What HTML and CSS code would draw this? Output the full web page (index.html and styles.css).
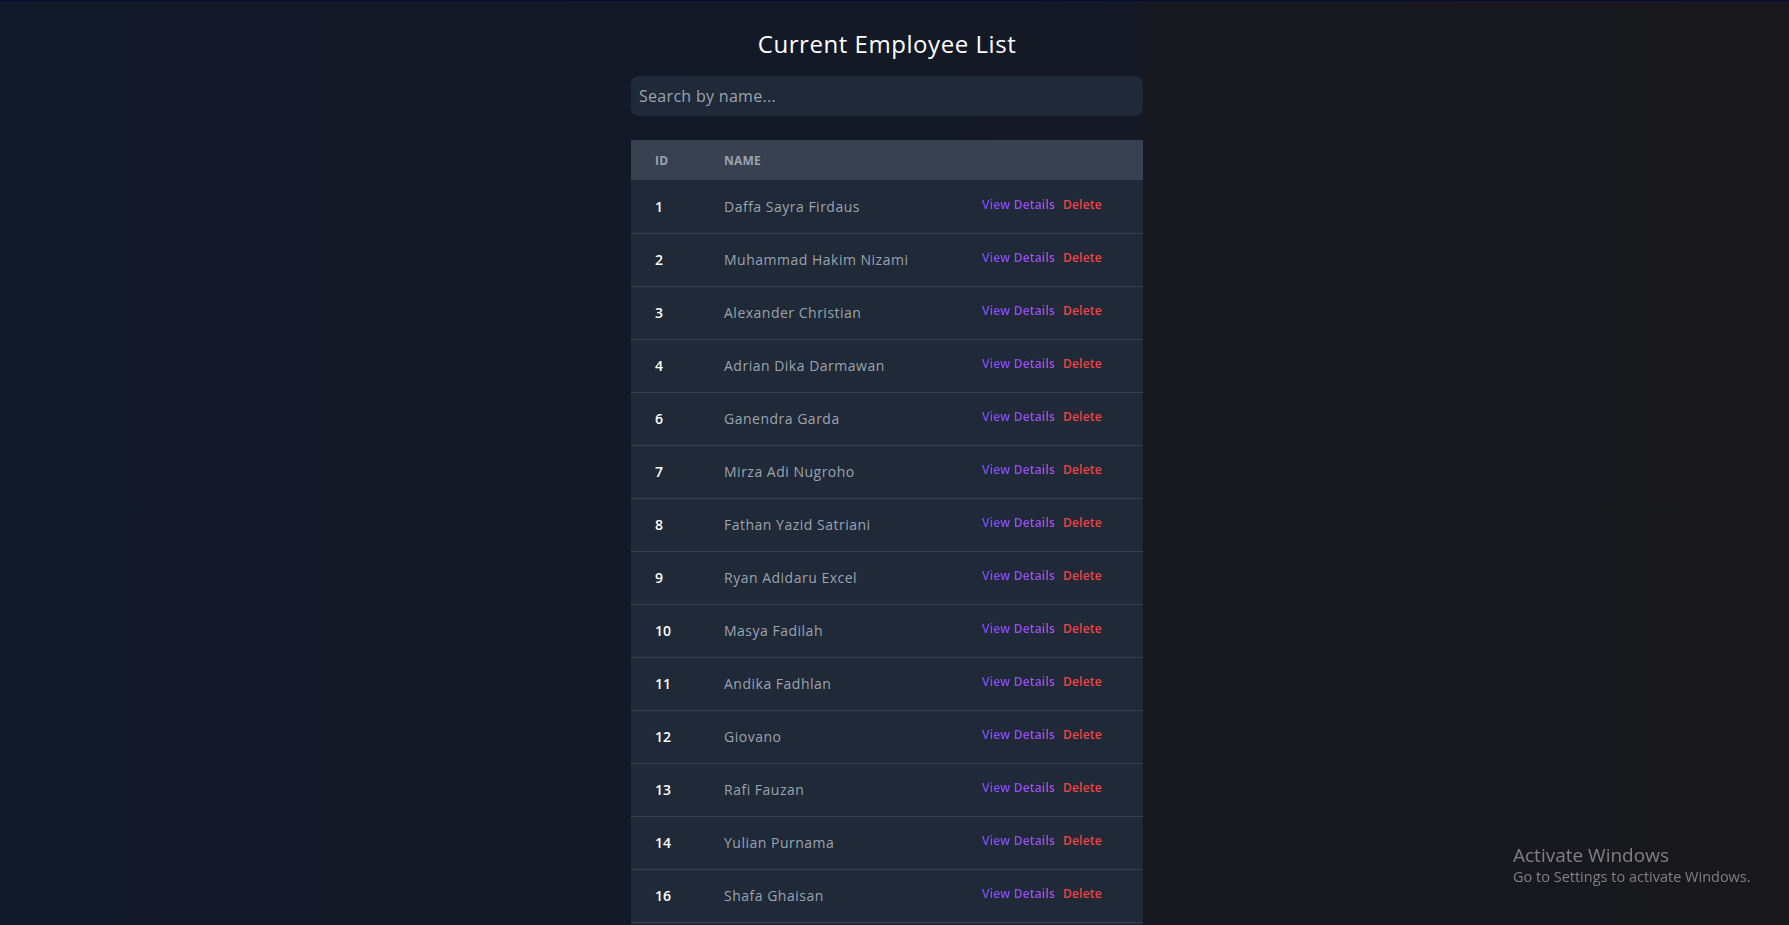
FILE: index.html
```html
<!DOCTYPE html>
<html lang="en">
<head>
<meta charset="utf-8">
<title>Current Employee List</title>
<link rel="stylesheet" href="styles.css">
</head>
<body>
<div class="page">
  <main class="column">
    <h1 class="title">Current Employee List</h1>
    <input class="search" type="text" placeholder="Search by name...">
    <table class="emp-table">
      <colgroup>
        <col class="c-id">
        <col class="c-name">
        <col class="c-act">
      </colgroup>
      <thead>
        <tr><th>ID</th><th>Name</th><th></th></tr>
      </thead>
      <tbody>
        <tr><td class="id">1</td><td class="name">Daffa Sayra Firdaus</td><td class="act"><a class="view">View Details</a><a class="del">Delete</a></td></tr>
        <tr><td class="id">2</td><td class="name">Muhammad Hakim Nizami</td><td class="act"><a class="view">View Details</a><a class="del">Delete</a></td></tr>
        <tr><td class="id">3</td><td class="name">Alexander Christian</td><td class="act"><a class="view">View Details</a><a class="del">Delete</a></td></tr>
        <tr><td class="id">4</td><td class="name">Adrian Dika Darmawan</td><td class="act"><a class="view">View Details</a><a class="del">Delete</a></td></tr>
        <tr><td class="id">6</td><td class="name">Ganendra Garda</td><td class="act"><a class="view">View Details</a><a class="del">Delete</a></td></tr>
        <tr><td class="id">7</td><td class="name">Mirza Adi Nugroho</td><td class="act"><a class="view">View Details</a><a class="del">Delete</a></td></tr>
        <tr><td class="id">8</td><td class="name">Fathan Yazid Satriani</td><td class="act"><a class="view">View Details</a><a class="del">Delete</a></td></tr>
        <tr><td class="id">9</td><td class="name">Ryan Adidaru Excel</td><td class="act"><a class="view">View Details</a><a class="del">Delete</a></td></tr>
        <tr><td class="id">10</td><td class="name">Masya Fadilah</td><td class="act"><a class="view">View Details</a><a class="del">Delete</a></td></tr>
        <tr><td class="id">11</td><td class="name">Andika Fadhlan</td><td class="act"><a class="view">View Details</a><a class="del">Delete</a></td></tr>
        <tr><td class="id">12</td><td class="name">Giovano</td><td class="act"><a class="view">View Details</a><a class="del">Delete</a></td></tr>
        <tr><td class="id">13</td><td class="name">Rafi Fauzan</td><td class="act"><a class="view">View Details</a><a class="del">Delete</a></td></tr>
        <tr><td class="id">14</td><td class="name">Yulian Purnama</td><td class="act"><a class="view">View Details</a><a class="del">Delete</a></td></tr>
        <tr><td class="id">16</td><td class="name">Shafa Ghaisan</td><td class="act"><a class="view">View Details</a><a class="del">Delete</a></td></tr>
        <tr class="spacer"><td></td><td></td><td></td></tr>
      </tbody>
    </table>
  </main>
</div>
<div class="activate">
  <div class="act-title">Activate Windows</div>
  <div class="act-sub">Go to Settings to activate Windows.</div>
</div>
</body>
</html>
```
FILE: styles.css
```css
* { box-sizing: border-box; }
html, body { margin: 0; padding: 0; }
body {
  height: 925px;
  overflow: hidden;
  font-family: "Open Sans", "Noto Sans", sans-serif;
  border-top: 1px solid #080c3c;
  background: linear-gradient(to right, #111827 0px, #141925 1143px, #17181f 1143px, #18181c 100%);
}
.page {
  min-height: 924px;
}
.column {
  width: 512px;
  margin-left: 631px;
  display: flex;
  flex-direction: column;
}
.title {
  margin: 24px 0 0;
  height: 37px;
  line-height: 37px;
  text-align: center;
  color: #ffffff;
  font-size: 24px;
  font-weight: 500;
  letter-spacing: 0.55px;
}
.search {
  margin-top: 14px;
  height: 40px;
  width: 100%;
  border: none;
  outline: none;
  border-radius: 7px;
  background: #1f2937;
  color: #d1d5db;
  padding: 0 8px;
  font-family: inherit;
  font-size: 16px;
  letter-spacing: 0.3px;
}
.search::placeholder { color: #9ca3af; }
.emp-table {
  margin-top: 24px;
  width: 100%;
  border-collapse: collapse;
  table-layout: fixed;
  background: #1f2937;
}
.c-id { width: 69px; }
.c-name { width: 258px; }
.emp-table th {
  background: #374151;
  height: 40px;
  padding: 0 0 0 24px;
  text-align: left;
  color: #9ca3af;
  font-size: 12px;
  font-weight: 700;
  text-transform: uppercase;
  letter-spacing: 0.2px;
}
.emp-table td {
  height: 53px;
  padding: 0 0 0 24px;
  border-bottom: 1px solid #374151;
  font-size: 14px;
  white-space: nowrap;
}
.emp-table td.id {
  color: #ffffff;
  font-weight: 600;
}
.emp-table td.name {
  color: #9ca3af;
  letter-spacing: 0.5px;
}
.emp-table td.act {
  padding-bottom: 4px;
  font-size: 12px;
  font-weight: 600;
  letter-spacing: 0.2px;
}
.view {
  background: linear-gradient(to right, #7c4dff, #b14ff2);
  -webkit-background-clip: text;
  background-clip: text;
  color: transparent;
  margin-right: 8px;
}
.del {
  color: #ef4444;
}
.activate {
  position: fixed;
  left: 1513px;
  top: 843px;
  color: #808084;
  font-family: "Open Sans", "Liberation Sans", sans-serif;
  font-weight: 400;
}
.act-title {
  font-size: 19px;
  line-height: 24px;
}
.act-sub {
  font-size: 14.5px;
  line-height: 20px;
}
```
